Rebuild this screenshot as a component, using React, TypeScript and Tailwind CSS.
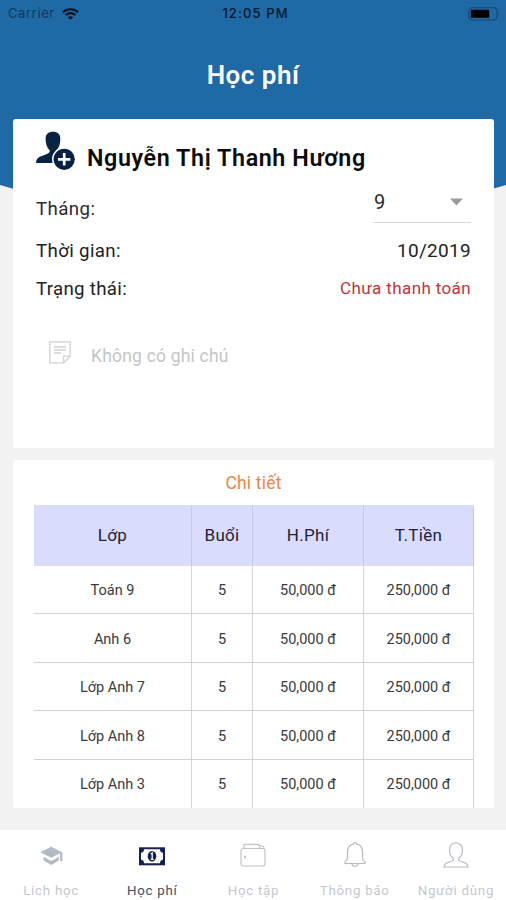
import type { ReactNode } from "react";

type Row = { name: string; sessions: number; fee: string; total: string };

const rows: Row[] = ["Toán 9", "Anh 6", "Lớp Anh 7", "Lớp Anh 8", "Lớp Anh 3"].map((name) => ({
  name,
  sessions: 5,
  fee: "50,000 đ",
  total: "250,000 đ",
}));

function StatusBar() {
  return (
    <div className="grid h-[27px] grid-cols-3 items-center pr-[6px] pl-2 font-['Inter',sans-serif] text-[12.5px] text-[#07182b]">
      <div className="flex items-center gap-[7px]">
        <span className="text-[13px] tracking-[0.6px] text-[#123a60]">Carrier</span>
        <svg width="17" height="12" viewBox="0 0 17 12" fill="none" stroke="#06121f" strokeWidth="2.1">
          <path d="M1 4.3C5.2.3 11.8.3 16 4.3" />
          <path d="M3.7 7.1c2.7-2.6 6.9-2.6 9.6 0" />
          <path d="M8.5 11.8 5.9 9.2c1.5-1.4 3.7-1.4 5.2 0Z" fill="#06121f" stroke="none" />
        </svg>
      </div>
      <span className="pl-[3px] text-center text-[13px] font-medium tracking-[1.1px] whitespace-nowrap">12:05 PM</span>
      <svg className="justify-self-end" width="32" height="14" viewBox="0 0 32 14">
        <rect x="0.7" y="0.7" width="28" height="12.3" rx="3" fill="none" stroke="#174d7d" strokeWidth="1.2" />
        <rect x="2.8" y="2.8" width="18.4" height="8" rx="0.8" fill="#000" />
        <path d="M30 4.8v4c1.6-.5 1.6-3.5 0-4Z" fill="#174d7d" />
      </svg>
    </div>
  );
}

function UserPlusIcon() {
  return (
    <svg width="40" height="40" viewBox="0 0 40 40" fill="#082344">
      <path d="M9.6 7.6C9.6 3 12.5.8 17 .8s7.300 2.200 7.300 6.800c0 5-1 9.300-4 11.600v2.600L17 24l-3.300-2.200v-2.600c-3-2.300-4.100-6.600-4.100-11.600Z" />
      <path d="M0 31.900c.2-4.700 3.200-6.400 7.200-7.500 2.700-.8 4.800-1.600 6.500-3.400l4 2.500-.6 8.400Z" />
      <circle cx="28.200" cy="28.300" r="12.200" fill="#fff" />
      <circle cx="28.200" cy="28.300" r="10.600" fill="#0a1f45" />
      <path d="M28.200 22.100v12.400M22 28.300h12.400" stroke="#fff" strokeWidth="2.700" />
    </svg>
  );
}

function NoteIcon() {
  return (
    <svg width="22" height="23" viewBox="0 0 22 23" fill="none" stroke="#d2d2d2" strokeWidth="1.300">
      <path d="M.8.8h20.400v14.400l-6.600 6.600H.8Z" />
      <path d="M21.200 15.200h-6.600v6.600M5 6h12M5 9h12M5 12h7" />
    </svg>
  );
}

function InfoCard() {
  return (
    <section className="flex h-[329px] flex-col rounded-[3px] bg-white pr-[23px] pl-[23px]">
      <div className="flex h-[64px] items-start pt-[12px]">
        <UserPlusIcon />
        <h2 className="ml-[11px] pt-[12px] text-[23.3px] leading-[30px] font-semibold tracking-[0.6px] whitespace-nowrap text-[#0b0b0b]">
          Nguyễn Thị Thanh Hương
        </h2>
      </div>
      <div className="flex h-[40px] justify-between text-[18.700px] text-[#2b2b2b]">
        <span className="pt-[14px] leading-[24px] tracking-[0.4px]">Tháng:</span>
        <div className="flex w-[98px] items-start justify-between border-b border-[#d9d9d9] pr-[8px]">
          <span className="pt-[7px] pl-px text-[20px] leading-[24px]">9</span>
          <svg className="mt-[15px]" width="13" height="8" viewBox="0 0 13 8">
            <path d="M0 .5h13L6.500 7.500Z" fill="#9b9b9b" />
          </svg>
        </div>
      </div>
      <div className="mt-px flex h-[54px] items-center justify-between text-[18.700px] text-[#222]">
        <span className="tracking-[0.35px]">Thời gian:</span>
        <span className="text-[19px] tracking-[0.3px]">10/2019</span>
      </div>
      <div className="flex h-[22px] items-center justify-between text-[18.700px] text-[#222]">
        <span className="tracking-[0.3px]">Trạng thái:</span>
        <span className="text-[17px] tracking-[0.38px] text-[#c0353a]">Chưa thanh toán</span>
      </div>
      <div className="flex items-start pt-[41px] pl-[13px]">
        <NoteIcon />
        <span className="ml-[20px] pt-[3px] text-[17.500px] leading-[24px] tracking-[0.2px] text-[#c5c5c5]">Không có ghi chú</span>
      </div>
    </section>
  );
}

function Cell({ children }: { children: ReactNode }) {
  return <div className="flex items-center justify-center border-r border-[#d3d5da] pt-[3px]">{children}</div>;
}

function DetailCard() {
  return (
    <section className="mt-[12px] flex h-[348px] flex-col overflow-hidden rounded-[3px] bg-white px-[21px]">
      <h3 className="h-[45px] text-center text-[17.500px] leading-[46px] tracking-[0.2px] text-[#f08444]">Chi tiết</h3>
      <div className="grid h-[61px] w-[440px] shrink-0 grid-cols-[158px_61px_111px_110px] bg-[#d9dcfd] pt-px text-[17px] tracking-[0.3px] text-[#202338]">
        <div className="flex items-center justify-center border-r border-[#c5c9e6]">Lớp</div>
        <div className="flex items-center justify-center border-r border-[#c5c9e6]">Buổi</div>
        <div className="flex items-center justify-center border-r border-[#c5c9e6]">H.Phí</div>
        <div className="flex items-center justify-center border-r border-[#c5c9e6]">T.Tiền</div>
      </div>
      <div className="grid h-[242px] w-[440px] shrink-0 grid-rows-5 divide-y divide-[#cfd1d6] text-[14.500px] text-[#3a3a3a]">
        {rows.map((row) => (
          <div key={row.name} className="grid grid-cols-[158px_61px_111px_110px]">
            <Cell>{row.name}</Cell>
            <Cell>{row.sessions}</Cell>
            <Cell>{row.fee}</Cell>
            <Cell>{row.total}</Cell>
          </div>
        ))}
      </div>
    </section>
  );
}

function ScheduleIcon() {
  return (
    <svg width="28" height="28" viewBox="0 0 28 28" fill="#b3bac5">
      <path d="M3.200 10.200 14.300 4.800l10.800 5.400-10.800 5.600Z" />
      <path d="M6.500 14.800v3.600l7.800 4.600 7.500-4.600v-3.600l-7.500 4.300Z" />
      <path d="M23.100 10.200h2.300v9h-2.300Z" />
    </svg>
  );
}

function MoneyIcon() {
  return (
    <svg width="28" height="28" viewBox="0 0 28 28">
      <rect x="1" y="5.300" width="26" height="18" fill="#152052" />
      <path d="M6 7.300h16c0 2 1 3.500 3 3.500v7c-2 0-3 1.500-3 3.500H6c0-2-1-3.500-3-3.500v-7c2 0 3-1.500 3-3.500Z" fill="#fff" />
      <ellipse cx="14" cy="14.300" rx="4.300" ry="5.300" fill="#152052" />
      <path d="m12.700 12.100 1.500-1.100v6.300m-1.500 0h3" fill="none" stroke="#fff" strokeWidth="1.300" />
    </svg>
  );
}

function WalletIcon() {
  return (
    <svg width="28" height="28" viewBox="0 0 28 28" fill="none" stroke="#bfc3ca" strokeWidth="1.200">
      <path d="M5 6.500h18.500q2.500 0 2.500 2.500v12.500q0 2.500-2.500 2.500h-19Q2 24 2 21.500V9q0-2.500 3-2.500ZM5 6.500V3.300q0-1 1-1h13l2.500 4.200M19 2.800l5 1.500q1 .5 1 2.600" />
      <path d="M6 13.800v2.400" strokeWidth="1.800" />
    </svg>
  );
}

function BellIcon() {
  return (
    <svg width="28" height="28" viewBox="0 0 28 28" fill="none" stroke="#b4bac4" strokeWidth="1.200">
      <path d="M12.200 2.200c0-2 3.600-2 3.600 0 4.100.8 5.700 4.100 5.700 8v5.600c0 2 .8 3.200 2.500 4.200v1.500H4V20c1.700-1 2.500-2.200 2.500-4.200v-5.600c0-3.900 1.600-7.200 5.700-8Z" />
      <path d="M10.800 21.500c.5 3.700 5.900 3.700 6.400 0" />
    </svg>
  );
}

function PersonIcon() {
  return (
    <svg width="28" height="28" viewBox="0 0 28 28" fill="none" stroke="#b4bac4" strokeWidth="1.200">
      <path d="M14 1C9.800 1 7.500 3.700 7.500 8c0 3.800 1.300 6.500 3.700 8.200v2.300c-.8 1-3 1.300-5.200 2-2.900.9-4 1.700-4 4.500h24c0-2.800-1.100-3.600-4-4.500-2.200-.7-4.400-1-5.200-2v-2.300c2.400-1.700 3.700-4.400 3.700-8.200 0-4.300-2.300-7-6.500-7Z" />
    </svg>
  );
}

const tabs = [
  { label: "Lich học", icon: <ScheduleIcon />, color: "text-[#c3c7cf]" },
  { label: "Học phí", icon: <MoneyIcon />, color: "text-[#3f4d64]" },
  { label: "Học tập", icon: <WalletIcon />, color: "text-[#c3c7cf]" },
  { label: "Thông báo", icon: <BellIcon />, color: "text-[#c3c7cf]" },
  { label: "Người dùng", icon: <PersonIcon />, color: "text-[#c3c7cf]" },
];

export default function App() {
  return (
    <div className="relative isolate flex h-[900px] w-[506px] flex-col overflow-hidden bg-[#f2f2f2] font-['Roboto',sans-serif]">
      <svg className="absolute top-0 left-0 -z-10" width="506" height="230" viewBox="0 0 506 230">
        <path d="M0 0H506V185Q253 262 0 185Z" fill="#1f69a5" />
      </svg>
      <StatusBar />
      <h1 className="h-[92px] pt-[32px] text-center text-[26px] leading-[32px] font-semibold tracking-[0.5px] text-white">Học phí</h1>
      <main className="flex flex-1 flex-col pr-[12px] pl-[13px]">
        <InfoCard />
        <DetailCard />
      </main>
      <nav className="grid h-[70px] shrink-0 grid-cols-5 bg-white">
        {tabs.map((tab) => (
          <button key={tab.label} className={`flex flex-col items-center pt-[12px] pl-px ${tab.color}`}>
            {tab.icon}
            <span className="mt-[12px] text-[13.300px] leading-[18px] tracking-[0.75px] whitespace-nowrap">{tab.label}</span>
          </button>
        ))}
      </nav>
    </div>
  );
}
